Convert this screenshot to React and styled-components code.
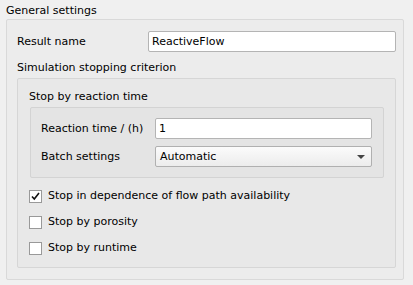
import styled, { createGlobalStyle } from 'styled-components';

const GlobalStyle = createGlobalStyle`
    html, body {
        margin: 0;
        padding: 0;
        background: #f0f0f0;
    }
    body {
        font-family: 'DejaVu Sans', Verdana, sans-serif;
        font-size: 11px;
        color: #000;
    }
`;

const Page = styled.div`
    width: 413px;
    height: 285px;
    padding: 0 0 0 6px;
    box-sizing: border-box;
`;

const Title = styled.div`
    height: 19px;
    padding-top: 4px;
    box-sizing: border-box;
    line-height: 14px;
`;

const Frame = styled.div`
    display: flex;
    flex-direction: column;
    box-sizing: border-box;
    width: ${({ width }) => width ? `${width}px` : 'auto'};
    margin-left: ${({ offset }) => offset || 0}px;
    padding: ${({ padding }) => padding};
    border: 1px solid ${({ border }) => border};
    border-radius: 2px;
    background: ${({ bg }) => bg};
`;

const Row = styled.div`
    display: flex;
    align-items: center;
    height: 21px;
    margin-top: ${({ gap }) => gap || 0}px;
`;

const Label = styled.div`
    width: ${({ width }) => width}px;
    flex-shrink: 0;
    line-height: 14px;
`;

const SectionLabel = styled.div`
    height: ${({ height }) => height}px;
    display: flex;
    align-items: flex-end;
    padding-bottom: ${({ bottom }) => bottom}px;
    box-sizing: border-box;
    line-height: 14px;
`;

const Input = styled.div`
    flex: 1;
    height: 21px;
    box-sizing: border-box;
    border: 1px solid #b4b4b4;
    border-radius: 2px;
    background: #fff;
    padding: 0 3px;
    display: flex;
    align-items: center;
    line-height: 14px;
`;

const Combo = styled(Input)`
    justify-content: space-between;
    padding: 0 6px 0 4px;
    border-color: #b0b0b0;
    background: linear-gradient(#fbfbfb, #ececec);
`;

const Arrow = styled.span`
    width: 0;
    height: 0;
    border-left: 4px solid transparent;
    border-right: 4px solid transparent;
    border-top: 4px solid #444;
    margin-top: 1px;
`;

const CheckList = styled.div`
    display: flex;
    flex-direction: column;
    margin-top: 5px;
`;

const CheckRow = styled.label`
    display: flex;
    align-items: center;
    height: 26px;
    gap: 6px;
    line-height: 14px;
`;

const Box = styled.span`
    width: 13px;
    height: 13px;
    box-sizing: border-box;
    border: 1px solid #999;
    background: #fff;
    display: flex;
    align-items: center;
    justify-content: center;
`;

const Check = ({ checked, children }) => (
    <CheckRow>
        <Box>
            {checked && (
                <svg width="9" height="9" viewBox="0 0 9 9">
                    <path d="M1 4.5 L3.3 7 L8 1" fill="none" stroke="#111" strokeWidth="1.6" />
                </svg>
            )}
        </Box>
        {children}
    </CheckRow>
);

const App = () => {
    return (
        <>
            <GlobalStyle />
            <Page>
                <Title>General settings</Title>
                <Frame width="398" padding="11px 7px 11px 10px" border="#d9d9d9" bg="#ececec">
                    <Row>
                        <Label width="131">Result name</Label>
                        <Input>ReactiveFlow</Input>
                    </Row>
                    <SectionLabel height="26" bottom="3">Simulation stopping criterion</SectionLabel>
                    <Frame padding="0 11px 6px 11px" border="#d6d6d6" bg="#e8e8e8">
                        <SectionLabel height="28" bottom="3">Stop by reaction time</SectionLabel>
                        <Frame offset="1" padding="10px 11px 10px 10px" border="#d3d3d3" bg="#e4e4e4">
                            <Row>
                                <Label width="114">Reaction time / (h)</Label>
                                <Input>1</Input>
                            </Row>
                            <Row gap="7">
                                <Label width="114">Batch settings</Label>
                                <Combo>Automatic<Arrow /></Combo>
                            </Row>
                        </Frame>
                        <CheckList>
                            <Check checked>Stop in dependence of flow path availability</Check>
                            <Check>Stop by porosity</Check>
                            <Check>Stop by runtime</Check>
                        </CheckList>
                    </Frame>
                </Frame>
            </Page>
        </>
    );
};

export default App;
